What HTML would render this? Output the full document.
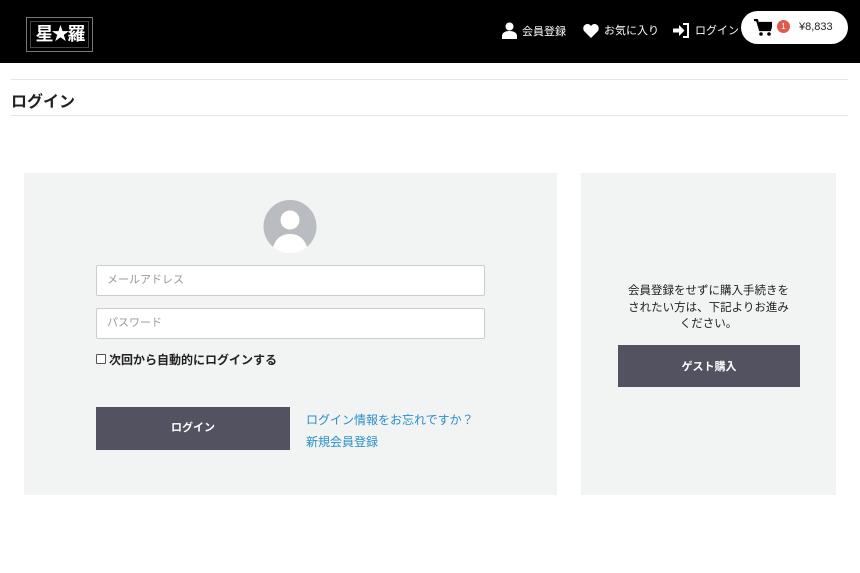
<!DOCTYPE html>
<html><head><meta charset="utf-8"><style>
*{box-sizing:border-box;margin:0;padding:0}
body{width:860px;height:573px;background:#fff;font-family:"Liberation Sans","Noto Sans CJK JP",sans-serif;position:relative;overflow:hidden;color:#222}
.hdr{position:absolute;left:0;top:0;width:860px;height:63px;background:#000}
.logo{position:absolute;left:26px;top:17px;width:67px;height:35px;border:1px solid #777;color:#fff;font-weight:bold;font-size:18px;line-height:33px;text-align:center;letter-spacing:-2px}
.logo:after{content:"";position:absolute;left:3px;top:3px;right:3px;bottom:3px;border:1px solid #444}
.nav{position:absolute;top:22px;color:#fff;font-size:11px;display:flex;align-items:center;gap:5px}
.cart{position:absolute;left:741px;top:11px;width:107px;height:33px;background:#fff;border-radius:17px}
.badge{position:absolute;left:36px;top:9px;width:13px;height:13px;border-radius:50%;background:#e05a4f;color:#fff;font-size:8px;line-height:13px;text-align:center}
.line{position:absolute;left:11px;width:837px;height:1px;background:#e6e6e6}
h1{position:absolute;left:11px;top:88px;font-size:16px;font-weight:bold}
.panel{position:absolute;background:#f2f3f3}
.input{position:absolute;left:96px;width:389px;height:31px;background:#fff;border:1px solid #ccc;border-radius:2px;font-size:11px;color:#999;padding-left:10px;line-height:29px}
.btn{position:absolute;background:#535260;color:#fff;font-weight:bold;font-size:11px;text-align:center}
a{color:#2a8fc8;text-decoration:none;font-size:12px;position:absolute}
</style></head><body>
<div class="hdr">
<div class="logo">星★羅</div>
<div class="nav" style="left:502px"><svg width="15" height="17" viewBox="0 0 15 17"><circle cx="7.5" cy="4.5" r="4" fill="#fff"/><path d="M0 17v-3c0-3 3-5 7.5-5s7.5 2 7.5 5v3z" fill="#fff"/></svg>会員登録</div>
<div class="nav" style="left:583px"><svg width="16" height="15" viewBox="0 0 16 15"><path d="M8 15L1.5 8.5C-1 6 .5 1 4.5 1 6 1 7.3 2 8 3 8.7 2 10 1 11.5 1c4 0 5.5 5 3 7.5z" fill="#fff"/></svg>お気に入り</div>
<div class="nav" style="left:673px"><svg width="17" height="15" viewBox="0 0 17 15"><path d="M0 5.5h6V2l5.5 5.5L6 13V9.5H0z" fill="#fff"/><path d="M10 1h5v13h-5" stroke="#fff" stroke-width="2" fill="none"/></svg>ログイン</div>
<div class="cart"><svg style="position:absolute;left:13px;top:8px" width="18" height="17" viewBox="0 0 18 17"><path d="M0 1h3l3 10h10l2-7H5" stroke="#000" stroke-width="2.2" fill="#000"/><circle cx="7" cy="15" r="1.8"/><circle cx="15" cy="15" r="1.8"/></svg><div class="badge">1</div><span style="position:absolute;left:58px;top:10px;font-size:11px;color:#222">¥8,833</span></div>
</div>
<div class="line" style="top:79px"></div>
<h1>ログイン</h1>
<div class="line" style="top:115px"></div>
<div class="panel" style="left:24px;top:173px;width:533px;height:322px"></div>
<svg style="position:absolute;left:263px;top:200px" width="54" height="53" viewBox="0 0 54 53"><circle cx="27" cy="26.5" r="26.5" fill="#b9bcc0"/><circle cx="27" cy="20" r="9.5" fill="#fff"/><path d="M10 47c3-9 9-13 17-13s14 4 17 13a26 26 0 0 1-34 0z" fill="#fff"/></svg>
<div class="input" style="top:265px">メールアドレス</div>
<div class="input" style="top:308px">パスワード</div>
<div style="position:absolute;left:96px;top:354px;width:10px;height:10px;border:1px solid #555;background:#fff;border-radius:1px"></div>
<div style="position:absolute;left:109px;top:351px;font-size:12px;font-weight:bold">次回から自動的にログインする</div>
<div class="btn" style="left:96px;top:407px;width:194px;height:43px;line-height:43px">ログイン</div>
<a style="left:306px;top:411px">ログイン情報をお忘れですか？</a>
<a style="left:306px;top:433px">新規会員登録</a>
<div class="panel" style="left:581px;top:173px;width:255px;height:322px"></div>
<div style="position:absolute;left:581px;top:283px;width:255px;text-align:center;font-size:11.5px;line-height:16.5px">会員登録をせずに購入手続きを<br>されたい方は、下記よりお進み<br>ください。</div>
<div class="btn" style="left:618px;top:345px;width:182px;height:42px;line-height:44px">ゲスト購入</div>
</body></html>
